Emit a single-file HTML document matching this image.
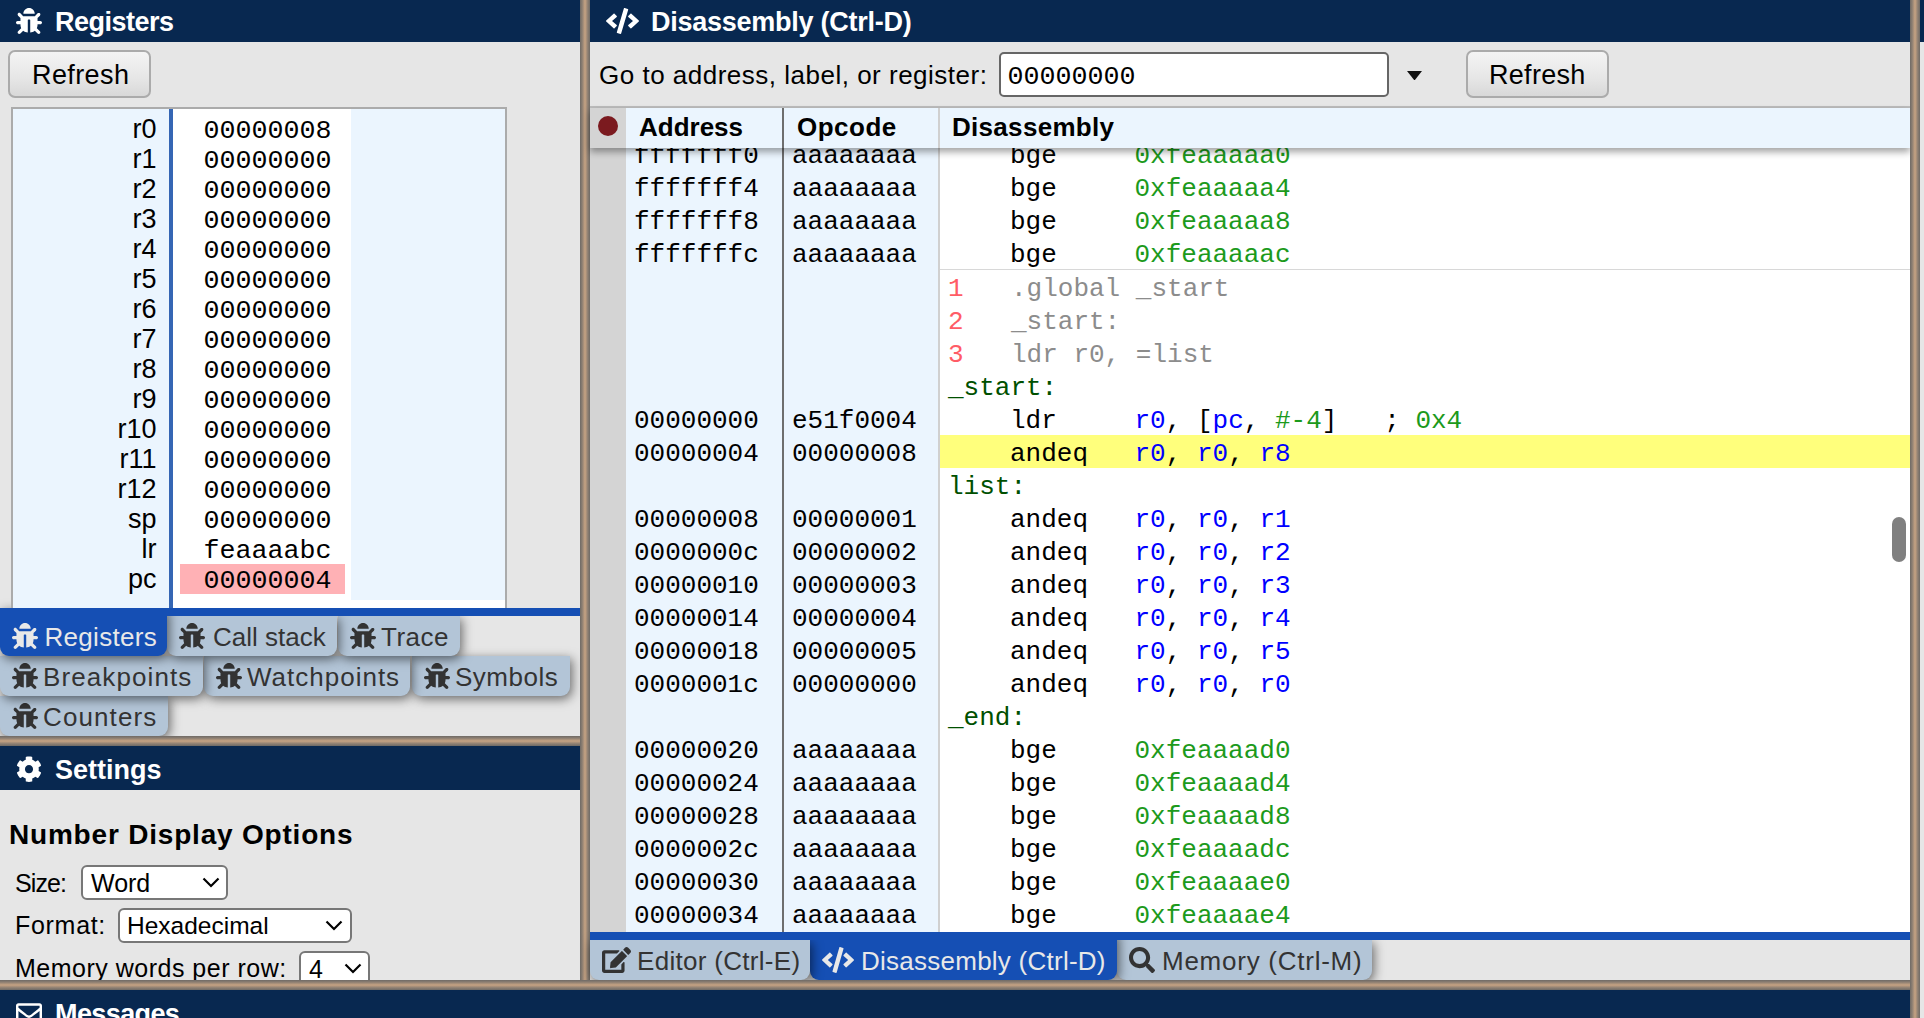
<!DOCTYPE html><html><head><meta charset="utf-8"><style>
*{box-sizing:border-box;margin:0;padding:0}
html,body{width:1924px;height:1018px;overflow:hidden;background:#e6e6e6;font-family:"Liberation Sans",sans-serif;color:#000;position:relative}
.abs{position:absolute}
.nav{background:#082850}
.vdiv{background:linear-gradient(90deg,#6e6a66 0%,#8d7f72 22%,#c6a383 50%,#8d7f72 78%,#6e6a66 100%)}
.hdiv{background:linear-gradient(180deg,#6e6a66 0%,#8d7f72 22%,#c6a383 50%,#8d7f72 78%,#6e6a66 100%)}
.t{position:absolute;white-space:pre;line-height:1}
.ht{font-weight:bold;font-size:27px;color:#fff}
.btn{position:absolute;border:2px solid #ababab;border-radius:7px;background:linear-gradient(180deg,#f4f4f4 0%,#e6e6e6 60%,#d8d8d8 100%)}
.mono{font-family:"Liberation Mono",monospace}
.tab{position:absolute;background:#b3c5d7;border-radius:0 0 9px 9px;box-shadow:2px 3px 11px rgba(0,0,0,0.55)}
.tabt{font-size:26px;color:#333}
.sel{position:absolute;background:#fff;border:2px solid #777;border-radius:6px}
</style></head><body>
<div class="abs nav" style="left:0;top:0;width:580px;height:42px"></div>
<svg class="abs" style="left:16px;top:8px" width="26" height="26" viewBox="0 0 512 512" preserveAspectRatio="none"><path fill="#fff" d="M511.988 288.9c-.478 17.43-15.217 31.1-32.653 31.1H424v16c0 21.864-4.882 42.584-13.6 61.145l60.228 60.228c12.496 12.497 12.496 32.758 0 45.255-12.498 12.497-32.759 12.496-45.256 0l-54.736-54.736C345.886 467.965 314.351 480 280 480V236c0-6.627-5.373-12-12-12h-24c-6.627 0-12 5.373-12 12v244c-34.351 0-65.886-12.035-90.636-32.108l-54.736 54.736c-12.498 12.497-32.759 12.496-45.256 0-12.496-12.497-12.496-32.758 0-45.255l60.228-60.228C92.882 378.584 88 357.864 88 336v-16H32.666C15.23 320 .491 306.33.013 288.9-.484 270.816 14.028 256 32 256h56v-58.745l-46.628-46.628c-12.496-12.497-12.496-32.758 0-45.255 12.498-12.497 32.758-12.497 45.256 0L141.255 160h229.489l54.627-54.627c12.498-12.497 32.758-12.497 45.256 0 12.496 12.497 12.496 32.758 0 45.255L424 197.255V256h56c17.972 0 32.484 14.816 31.988 32.9zM257 0c-61.856 0-112 50.144-112 112h224C369 50.144 318.856 0 257 0z"/></svg>
<div class="t ht" style="left:55px;top:9px;letter-spacing:-0.5px">Registers</div>
<div class="btn" style="left:8px;top:50px;width:143px;height:48px"></div>
<div class="t" style="left:32px;top:62px;font-size:27px;letter-spacing:0.4px">Refresh</div>
<div class="tab" style="left:0px;top:696px;width:168px;height:40px"></div>
<svg class="abs" style="left:12px;top:703px" width="26" height="26" viewBox="0 0 512 512" preserveAspectRatio="none"><path fill="#333" d="M511.988 288.9c-.478 17.43-15.217 31.1-32.653 31.1H424v16c0 21.864-4.882 42.584-13.6 61.145l60.228 60.228c12.496 12.497 12.496 32.758 0 45.255-12.498 12.497-32.759 12.496-45.256 0l-54.736-54.736C345.886 467.965 314.351 480 280 480V236c0-6.627-5.373-12-12-12h-24c-6.627 0-12 5.373-12 12v244c-34.351 0-65.886-12.035-90.636-32.108l-54.736 54.736c-12.498 12.497-32.759 12.496-45.256 0-12.496-12.497-12.496-32.758 0-45.255l60.228-60.228C92.882 378.584 88 357.864 88 336v-16H32.666C15.23 320 .491 306.33.013 288.9-.484 270.816 14.028 256 32 256h56v-58.745l-46.628-46.628c-12.496-12.497-12.496-32.758 0-45.255 12.498-12.497 32.758-12.497 45.256 0L141.255 160h229.489l54.627-54.627c12.498-12.497 32.758-12.497 45.256 0 12.496 12.497 12.496 32.758 0 45.255L424 197.255V256h56c17.972 0 32.484 14.816 31.988 32.9zM257 0c-61.856 0-112 50.144-112 112h224C369 50.144 318.856 0 257 0z"/></svg>
<div class="t tabt" style="left:43px;top:704px;color:#333;letter-spacing:1.1px">Counters</div>
<div class="tab" style="left:412px;top:656px;width:158px;height:40px"></div>
<svg class="abs" style="left:424px;top:663px" width="26" height="26" viewBox="0 0 512 512" preserveAspectRatio="none"><path fill="#333" d="M511.988 288.9c-.478 17.43-15.217 31.1-32.653 31.1H424v16c0 21.864-4.882 42.584-13.6 61.145l60.228 60.228c12.496 12.497 12.496 32.758 0 45.255-12.498 12.497-32.759 12.496-45.256 0l-54.736-54.736C345.886 467.965 314.351 480 280 480V236c0-6.627-5.373-12-12-12h-24c-6.627 0-12 5.373-12 12v244c-34.351 0-65.886-12.035-90.636-32.108l-54.736 54.736c-12.498 12.497-32.759 12.496-45.256 0-12.496-12.497-12.496-32.758 0-45.255l60.228-60.228C92.882 378.584 88 357.864 88 336v-16H32.666C15.23 320 .491 306.33.013 288.9-.484 270.816 14.028 256 32 256h56v-58.745l-46.628-46.628c-12.496-12.497-12.496-32.758 0-45.255 12.498-12.497 32.758-12.497 45.256 0L141.255 160h229.489l54.627-54.627c12.498-12.497 32.758-12.497 45.256 0 12.496 12.497 12.496 32.758 0 45.255L424 197.255V256h56c17.972 0 32.484 14.816 31.988 32.9zM257 0c-61.856 0-112 50.144-112 112h224C369 50.144 318.856 0 257 0z"/></svg>
<div class="t tabt" style="left:455px;top:664px;color:#333;letter-spacing:0.5px">Symbols</div>
<div class="tab" style="left:204px;top:656px;width:206px;height:40px"></div>
<svg class="abs" style="left:216px;top:663px" width="26" height="26" viewBox="0 0 512 512" preserveAspectRatio="none"><path fill="#333" d="M511.988 288.9c-.478 17.43-15.217 31.1-32.653 31.1H424v16c0 21.864-4.882 42.584-13.6 61.145l60.228 60.228c12.496 12.497 12.496 32.758 0 45.255-12.498 12.497-32.759 12.496-45.256 0l-54.736-54.736C345.886 467.965 314.351 480 280 480V236c0-6.627-5.373-12-12-12h-24c-6.627 0-12 5.373-12 12v244c-34.351 0-65.886-12.035-90.636-32.108l-54.736 54.736c-12.498 12.497-32.759 12.496-45.256 0-12.496-12.497-12.496-32.758 0-45.255l60.228-60.228C92.882 378.584 88 357.864 88 336v-16H32.666C15.23 320 .491 306.33.013 288.9-.484 270.816 14.028 256 32 256h56v-58.745l-46.628-46.628c-12.496-12.497-12.496-32.758 0-45.255 12.498-12.497 32.758-12.497 45.256 0L141.255 160h229.489l54.627-54.627c12.498-12.497 32.758-12.497 45.256 0 12.496 12.497 12.496 32.758 0 45.255L424 197.255V256h56c17.972 0 32.484 14.816 31.988 32.9zM257 0c-61.856 0-112 50.144-112 112h224C369 50.144 318.856 0 257 0z"/></svg>
<div class="t tabt" style="left:247px;top:664px;color:#333;letter-spacing:1.0px">Watchpoints</div>
<div class="tab" style="left:0px;top:656px;width:203px;height:40px"></div>
<svg class="abs" style="left:12px;top:663px" width="26" height="26" viewBox="0 0 512 512" preserveAspectRatio="none"><path fill="#333" d="M511.988 288.9c-.478 17.43-15.217 31.1-32.653 31.1H424v16c0 21.864-4.882 42.584-13.6 61.145l60.228 60.228c12.496 12.497 12.496 32.758 0 45.255-12.498 12.497-32.759 12.496-45.256 0l-54.736-54.736C345.886 467.965 314.351 480 280 480V236c0-6.627-5.373-12-12-12h-24c-6.627 0-12 5.373-12 12v244c-34.351 0-65.886-12.035-90.636-32.108l-54.736 54.736c-12.498 12.497-32.759 12.496-45.256 0-12.496-12.497-12.496-32.758 0-45.255l60.228-60.228C92.882 378.584 88 357.864 88 336v-16H32.666C15.23 320 .491 306.33.013 288.9-.484 270.816 14.028 256 32 256h56v-58.745l-46.628-46.628c-12.496-12.497-12.496-32.758 0-45.255 12.498-12.497 32.758-12.497 45.256 0L141.255 160h229.489l54.627-54.627c12.498-12.497 32.758-12.497 45.256 0 12.496 12.497 12.496 32.758 0 45.255L424 197.255V256h56c17.972 0 32.484 14.816 31.988 32.9zM257 0c-61.856 0-112 50.144-112 112h224C369 50.144 318.856 0 257 0z"/></svg>
<div class="t tabt" style="left:43px;top:664px;color:#333;letter-spacing:1.1px">Breakpoints</div>
<div class="tab" style="left:338px;top:616px;width:122px;height:40px"></div>
<svg class="abs" style="left:350px;top:623px" width="26" height="26" viewBox="0 0 512 512" preserveAspectRatio="none"><path fill="#333" d="M511.988 288.9c-.478 17.43-15.217 31.1-32.653 31.1H424v16c0 21.864-4.882 42.584-13.6 61.145l60.228 60.228c12.496 12.497 12.496 32.758 0 45.255-12.498 12.497-32.759 12.496-45.256 0l-54.736-54.736C345.886 467.965 314.351 480 280 480V236c0-6.627-5.373-12-12-12h-24c-6.627 0-12 5.373-12 12v244c-34.351 0-65.886-12.035-90.636-32.108l-54.736 54.736c-12.498 12.497-32.759 12.496-45.256 0-12.496-12.497-12.496-32.758 0-45.255l60.228-60.228C92.882 378.584 88 357.864 88 336v-16H32.666C15.23 320 .491 306.33.013 288.9-.484 270.816 14.028 256 32 256h56v-58.745l-46.628-46.628c-12.496-12.497-12.496-32.758 0-45.255 12.498-12.497 32.758-12.497 45.256 0L141.255 160h229.489l54.627-54.627c12.498-12.497 32.758-12.497 45.256 0 12.496 12.497 12.496 32.758 0 45.255L424 197.255V256h56c17.972 0 32.484 14.816 31.988 32.9zM257 0c-61.856 0-112 50.144-112 112h224C369 50.144 318.856 0 257 0z"/></svg>
<div class="t tabt" style="left:381px;top:624px;color:#333;letter-spacing:0.5px">Trace</div>
<div class="tab" style="left:167px;top:616px;width:170px;height:40px"></div>
<svg class="abs" style="left:179px;top:623px" width="26" height="26" viewBox="0 0 512 512" preserveAspectRatio="none"><path fill="#333" d="M511.988 288.9c-.478 17.43-15.217 31.1-32.653 31.1H424v16c0 21.864-4.882 42.584-13.6 61.145l60.228 60.228c12.496 12.497 12.496 32.758 0 45.255-12.498 12.497-32.759 12.496-45.256 0l-54.736-54.736C345.886 467.965 314.351 480 280 480V236c0-6.627-5.373-12-12-12h-24c-6.627 0-12 5.373-12 12v244c-34.351 0-65.886-12.035-90.636-32.108l-54.736 54.736c-12.498 12.497-32.759 12.496-45.256 0-12.496-12.497-12.496-32.758 0-45.255l60.228-60.228C92.882 378.584 88 357.864 88 336v-16H32.666C15.23 320 .491 306.33.013 288.9-.484 270.816 14.028 256 32 256h56v-58.745l-46.628-46.628c-12.496-12.497-12.496-32.758 0-45.255 12.498-12.497 32.758-12.497 45.256 0L141.255 160h229.489l54.627-54.627c12.498-12.497 32.758-12.497 45.256 0 12.496 12.497 12.496 32.758 0 45.255L424 197.255V256h56c17.972 0 32.484 14.816 31.988 32.9zM257 0c-61.856 0-112 50.144-112 112h224C369 50.144 318.856 0 257 0z"/></svg>
<div class="t tabt" style="left:213px;top:624px;color:#333;letter-spacing:0.0px">Call stack</div>
<div class="tab" style="left:0px;top:608px;width:167px;height:48px;background:#154fb4"></div>
<svg class="abs" style="left:12px;top:623px" width="26" height="26" viewBox="0 0 512 512" preserveAspectRatio="none"><path fill="#e8e8e8" d="M511.988 288.9c-.478 17.43-15.217 31.1-32.653 31.1H424v16c0 21.864-4.882 42.584-13.6 61.145l60.228 60.228c12.496 12.497 12.496 32.758 0 45.255-12.498 12.497-32.759 12.496-45.256 0l-54.736-54.736C345.886 467.965 314.351 480 280 480V236c0-6.627-5.373-12-12-12h-24c-6.627 0-12 5.373-12 12v244c-34.351 0-65.886-12.035-90.636-32.108l-54.736 54.736c-12.498 12.497-32.759 12.496-45.256 0-12.496-12.497-12.496-32.758 0-45.255l60.228-60.228C92.882 378.584 88 357.864 88 336v-16H32.666C15.23 320 .491 306.33.013 288.9-.484 270.816 14.028 256 32 256h56v-58.745l-46.628-46.628c-12.496-12.497-12.496-32.758 0-45.255 12.498-12.497 32.758-12.497 45.256 0L141.255 160h229.489l54.627-54.627c12.498-12.497 32.758-12.497 45.256 0 12.496 12.497 12.496 32.758 0 45.255L424 197.255V256h56c17.972 0 32.484 14.816 31.988 32.9zM257 0c-61.856 0-112 50.144-112 112h224C369 50.144 318.856 0 257 0z"/></svg>
<div class="t tabt" style="left:44.5px;top:624px;color:#e8e8e8;letter-spacing:0.3px">Registers</div>
<div class="abs" style="left:11px;top:107px;width:496px;height:501px;border:2px solid #ababab;border-bottom:none;background:#ebf5fe"></div>
<div class="abs" style="left:351px;top:600px;width:154px;height:8px;background:#fff"></div>
<div class="abs" style="left:169px;top:109px;width:4px;height:499px;background:#3566b4"></div>
<div class="abs" style="left:173px;top:109px;width:178px;height:499px;background:#fff"></div>
<div class="abs" style="left:180px;top:564px;width:165px;height:30px;background:#ffb1b5"></div>
<div class="t" style="left:20px;width:136.5px;text-align:right;top:115.5px;font-size:27px;letter-spacing:0px">r0</div>
<div class="t mono" style="left:203.5px;top:118px;font-size:26.67px">00000008</div>
<div class="t" style="left:20px;width:136.5px;text-align:right;top:145.5px;font-size:27px;letter-spacing:0px">r1</div>
<div class="t mono" style="left:203.5px;top:148px;font-size:26.67px">00000000</div>
<div class="t" style="left:20px;width:136.5px;text-align:right;top:175.5px;font-size:27px;letter-spacing:0px">r2</div>
<div class="t mono" style="left:203.5px;top:178px;font-size:26.67px">00000000</div>
<div class="t" style="left:20px;width:136.5px;text-align:right;top:205.5px;font-size:27px;letter-spacing:0px">r3</div>
<div class="t mono" style="left:203.5px;top:208px;font-size:26.67px">00000000</div>
<div class="t" style="left:20px;width:136.5px;text-align:right;top:235.5px;font-size:27px;letter-spacing:0px">r4</div>
<div class="t mono" style="left:203.5px;top:238px;font-size:26.67px">00000000</div>
<div class="t" style="left:20px;width:136.5px;text-align:right;top:265.5px;font-size:27px;letter-spacing:0px">r5</div>
<div class="t mono" style="left:203.5px;top:268px;font-size:26.67px">00000000</div>
<div class="t" style="left:20px;width:136.5px;text-align:right;top:295.5px;font-size:27px;letter-spacing:0px">r6</div>
<div class="t mono" style="left:203.5px;top:298px;font-size:26.67px">00000000</div>
<div class="t" style="left:20px;width:136.5px;text-align:right;top:325.5px;font-size:27px;letter-spacing:0px">r7</div>
<div class="t mono" style="left:203.5px;top:328px;font-size:26.67px">00000000</div>
<div class="t" style="left:20px;width:136.5px;text-align:right;top:355.5px;font-size:27px;letter-spacing:0px">r8</div>
<div class="t mono" style="left:203.5px;top:358px;font-size:26.67px">00000000</div>
<div class="t" style="left:20px;width:136.5px;text-align:right;top:385.5px;font-size:27px;letter-spacing:0px">r9</div>
<div class="t mono" style="left:203.5px;top:388px;font-size:26.67px">00000000</div>
<div class="t" style="left:20px;width:136.5px;text-align:right;top:415.5px;font-size:27px;letter-spacing:0px">r10</div>
<div class="t mono" style="left:203.5px;top:418px;font-size:26.67px">00000000</div>
<div class="t" style="left:20px;width:136.5px;text-align:right;top:445.5px;font-size:27px;letter-spacing:0px">r11</div>
<div class="t mono" style="left:203.5px;top:448px;font-size:26.67px">00000000</div>
<div class="t" style="left:20px;width:136.5px;text-align:right;top:475.5px;font-size:27px;letter-spacing:0px">r12</div>
<div class="t mono" style="left:203.5px;top:478px;font-size:26.67px">00000000</div>
<div class="t" style="left:20px;width:136.5px;text-align:right;top:505.5px;font-size:27px;letter-spacing:0px">sp</div>
<div class="t mono" style="left:203.5px;top:508px;font-size:26.67px">00000000</div>
<div class="t" style="left:20px;width:136.5px;text-align:right;top:535.5px;font-size:27px;letter-spacing:0px">lr</div>
<div class="t mono" style="left:203.5px;top:538px;font-size:26.67px">feaaaabc</div>
<div class="t" style="left:20px;width:136.5px;text-align:right;top:565.5px;font-size:27px;letter-spacing:0px">pc</div>
<div class="t mono" style="left:203.5px;top:568px;font-size:26.67px">00000004</div>
<div class="abs" style="left:0;top:608px;width:580px;height:8px;background:#154fb4"></div>
<div class="abs hdiv" style="left:0;top:736px;width:580px;height:10px"></div>
<div class="abs nav" style="left:0;top:746px;width:580px;height:44px"></div>
<svg class="abs" style="left:16px;top:756px" width="26" height="26.3" viewBox="0 0 512 512" preserveAspectRatio="none"><path fill="#fff" d="M487.4 315.7l-42.6-24.6c4.3-23.2 4.3-47 0-70.2l42.6-24.6c4.9-2.8 7.1-8.600 5.5-14-11.1-35.6-30-67.8-54.7-94.6-3.8-4.1-10-5.1-14.8-2.3L380.8 110c-17.9-15.4-38.5-27.3-60.8-35.1V25.8c0-5.6-3.9-10.5-9.4-11.7-36.7-8.2-74.3-7.8-109.2 0-5.5 1.2-9.4 6.1-9.4 11.7V75c-22.2 7.9-42.8 19.8-60.8 35.1L88.7 85.5c-4.9-2.8-11-1.9-14.8 2.3-24.7 26.7-43.6 58.9-54.7 94.6-1.7 5.4.6 11.2 5.5 14L67.3 221c-4.3 23.2-4.3 47 0 70.2l-42.6 24.6c-4.9 2.8-7.1 8.6-5.5 14 11.1 35.6 30 67.8 54.7 94.6 3.8 4.1 10 5.1 14.8 2.3l42.6-24.6c17.9 15.4 38.5 27.3 60.8 35.1v49.2c0 5.6 3.9 10.5 9.4 11.7 36.7 8.2 74.3 7.8 109.2 0 5.5-1.2 9.4-6.1 9.4-11.7v-49.2c22.2-7.9 42.8-19.8 60.8-35.1l42.6 24.6c4.9 2.8 11 1.9 14.8-2.3 24.7-26.7 43.6-58.9 54.7-94.6 1.5-5.5-.7-11.3-5.6-14.1zM256 336c-44.1 0-80-35.9-80-80s35.9-80 80-80 80 35.9 80 80-35.9 80-80 80z"/></svg>
<div class="t ht" style="left:55px;top:757px">Settings</div>
<div class="t" style="left:9px;top:821px;font-size:28px;font-weight:bold;letter-spacing:0.8px">Number Display Options</div>
<div class="t" style="left:15px;top:871px;font-size:25px;letter-spacing:-0.9px">Size:</div>
<div class="sel" style="left:81px;top:865px;width:147px;height:35px"></div>
<div class="t" style="left:91px;top:871px;font-size:25px">Word</div>
<div class="t" style="left:15px;top:913px;font-size:25px;letter-spacing:0.7px">Format:</div>
<div class="sel" style="left:118px;top:908px;width:234px;height:35px"></div>
<div class="t" style="left:127px;top:914px;font-size:24.5px">Hexadecimal</div>
<div class="t" style="left:15px;top:956px;font-size:25px;letter-spacing:0.5px">Memory words per row:</div>
<div class="sel" style="left:299px;top:951px;width:71px;height:35px"></div>
<div class="t" style="left:309px;top:957px;font-size:25px">4</div>
<svg class="abs" style="left:202px;top:877px" width="18" height="11" viewBox="0 0 18 11"><path d="M1.5 1.5 L9 9 L16.5 1.5" fill="none" stroke="#000" stroke-width="2.2"/></svg>
<svg class="abs" style="left:325px;top:920px" width="18" height="11" viewBox="0 0 18 11"><path d="M1.5 1.5 L9 9 L16.5 1.5" fill="none" stroke="#000" stroke-width="2.2"/></svg>
<svg class="abs" style="left:344px;top:963px" width="18" height="11" viewBox="0 0 18 11"><path d="M1.5 1.5 L9 9 L16.5 1.5" fill="none" stroke="#000" stroke-width="2.2"/></svg>
<div class="abs vdiv" style="left:580px;top:0;width:10px;height:980px"></div>
<div class="abs nav" style="left:590px;top:0;width:1320px;height:42px"></div>
<svg class="abs" style="left:605.5px;top:8px" width="33" height="26" viewBox="0 0 640 512" preserveAspectRatio="none"><path fill="#fff" d="M278.9 511.5l-61-17.7c-6.4-1.8-10-8.5-8.2-14.9L346.2 8.7c1.8-6.4 8.5-10 14.9-8.2l61 17.7c6.4 1.8 10 8.5 8.2 14.9L293.8 503.3c-1.9 6.4-8.5 10.1-14.9 8.2zm-114-112.2l43.5-46.4c4.6-4.9 4.3-12.7-.8-17.2L117 256l90.6-79.7c5.1-4.5 5.5-12.3.8-17.2l-43.5-46.4c-4.5-4.8-12.1-5.1-17-.5L3.8 247.2c-5.1 4.7-5.1 12.800 0 17.5l144.1 135.1c4.9 4.6 12.5 4.4 17-.5zm327.2.6l144.1-135.1c5.1-4.7 5.1-12.8 0-17.5L492.1 112.1c-4.800-4.5-12.4-4.3-17 .5L431.6 159c-4.6 4.9-4.3 12.7.8 17.2L523 256l-90.6 79.7c-5.1 4.5-5.5 12.3-.8 17.2l43.5 46.4c4.5 4.9 12.1 5.1 17 .6z"/></svg>
<div class="t ht" style="left:651px;top:9px;letter-spacing:-0.25px">Disassembly (Ctrl-D)</div>
<div class="t" style="left:599px;top:62px;font-size:26px;letter-spacing:0.5px">Go to address, label, or register:</div>
<div class="abs" style="left:999px;top:52px;width:390px;height:45px;background:#fff;border:2px solid #666;border-radius:5px"></div>
<div class="t mono" style="left:1007.5px;top:64px;font-size:26.67px">00000000</div>
<svg class="abs" style="left:1406.5px;top:70.5px" width="15" height="9.5" viewBox="0 0 15 9.5"><path d="M0 0 H15 L7.5 9.5 Z" fill="#111"/></svg>
<div class="btn" style="left:1466px;top:50px;width:143px;height:48px"></div>
<div class="t" style="left:1489px;top:62px;font-size:27px;letter-spacing:0.3px">Refresh</div>
<div class="tab" style="left:1117px;top:940px;width:255px;height:40px"></div>
<svg class="abs" style="left:1129px;top:947px" width="26" height="26" viewBox="0 0 512 512" preserveAspectRatio="none"><path fill="#333" d="M505 442.7L405.3 343c-4.5-4.5-10.6-7-17-7H372c27.6-35.3 44-79.7 44-128C416 93.1 322.9 0 208 0S0 93.1 0 208s93.1 208 208 208c48.3 0 92.7-16.4 128-44v16.3c0 6.4 2.5 12.5 7 17l99.7 99.7c9.4 9.4 24.6 9.4 33.9 0l28.3-28.3c9.4-9.4 9.4-24.6.1-34zM208 336c-70.7 0-128-57.2-128-128 0-70.7 57.2-128 128-128 70.7 0 128 57.2 128 128 0 70.700-57.2 128-128 128z"/></svg>
<div class="t tabt" style="left:1162px;top:947.5px;color:#333;letter-spacing:0.75px">Memory (Ctrl-M)</div>
<div class="tab" style="left:810px;top:932px;width:307px;height:48px;background:#154fb4"></div>
<svg class="abs" style="left:822px;top:947px" width="32" height="26" viewBox="0 0 640 512" preserveAspectRatio="none"><path fill="#e8e8e8" d="M278.9 511.5l-61-17.7c-6.4-1.8-10-8.5-8.2-14.9L346.2 8.7c1.8-6.4 8.5-10 14.9-8.2l61 17.7c6.4 1.8 10 8.5 8.2 14.9L293.8 503.3c-1.9 6.4-8.5 10.1-14.9 8.2zm-114-112.2l43.5-46.4c4.6-4.9 4.3-12.7-.8-17.2L117 256l90.6-79.7c5.1-4.5 5.5-12.3.8-17.2l-43.5-46.4c-4.5-4.8-12.1-5.1-17-.5L3.8 247.2c-5.1 4.7-5.1 12.800 0 17.5l144.1 135.1c4.9 4.6 12.5 4.4 17-.5zm327.2.6l144.1-135.1c5.1-4.7 5.1-12.8 0-17.5L492.1 112.1c-4.800-4.5-12.4-4.3-17 .5L431.6 159c-4.6 4.9-4.3 12.7.8 17.2L523 256l-90.6 79.7c-5.1 4.5-5.5 12.3-.8 17.2l43.5 46.4c4.5 4.9 12.1 5.1 17 .6z"/></svg>
<div class="t tabt" style="left:861px;top:947.5px;color:#e8e8e8;letter-spacing:0.25px">Disassembly (Ctrl-D)</div>
<div class="tab" style="left:590px;top:940px;width:220px;height:40px"></div>
<svg class="abs" style="left:602px;top:947px" width="29" height="26" viewBox="0 0 576 512" preserveAspectRatio="none"><path fill="#333" d="M402.6 83.2l90.2 90.2c3.8 3.8 3.8 10 0 13.8L274.4 405.6l-92.8 10.3c-12.4 1.4-22.9-9.1-21.5-21.5l10.3-92.8L388.8 83.2c3.8-3.8 10-3.8 13.8 0zm162-22.9l-48.8-48.8c-15.2-15.2-39.9-15.2-55.2 0l-35.4 35.4c-3.8 3.8-3.8 10 0 13.8l90.2 90.2c3.8 3.8 10 3.8 13.8 0l35.4-35.4c15.2-15.300 15.2-40 0-55.2zM384 346.2V448H64V128h229.8c3.2 0 6.2-1.3 8.5-3.5l40-40c7.600-7.6 2.2-20.5-8.5-20.5H48C21.5 64 0 85.5 0 112v352c0 26.5 21.5 48 48 48h352c26.5 0 48-21.5 48-48V306.2c0-10.7-12.9-16-20.5-8.5l-40 40c-2.2 2.3-3.5 5.3-3.5 8.5z"/></svg>
<div class="t tabt" style="left:637px;top:947.5px;color:#333;letter-spacing:0.3px">Editor (Ctrl-E)</div>
<div class="abs" style="left:590px;top:106px;width:1320px;height:2px;background:#bdbdbd"></div>
<div class="abs" style="left:590px;top:108px;width:36px;height:824px;background:#d4d4d4"></div>
<div class="abs" style="left:626px;top:108px;width:156px;height:824px;background:#ebf5fe"></div>
<div class="abs" style="left:782px;top:108px;width:2px;height:824px;background:#6e6e6e"></div>
<div class="abs" style="left:784px;top:108px;width:154px;height:824px;background:#ebf5fe"></div>
<div class="abs" style="left:938px;top:108px;width:2px;height:824px;background:#d0d0d0"></div>
<div class="abs" style="left:940px;top:108px;width:970px;height:824px;background:#fff"></div>
<div class="abs" style="left:590px;top:108px;width:1320px;height:824px;overflow:hidden">
<div class="abs" style="left:-590px;top:-108px;width:1924px;height:1018px">
<div class="t mono" style="left:634px;top:143px;font-size:26px">fffffff0</div>
<div class="t mono" style="left:792px;top:143px;font-size:26px">aaaaaaaa</div>
<div class="t mono" style="left:1010px;top:143px;font-size:26px">bge</div>
<div class="t mono" style="left:1134.5px;top:143px;font-size:26px"><span style="color:#1c9a1c">0xfeaaaaa0</span></div>
<div class="t mono" style="left:634px;top:176px;font-size:26px">fffffff4</div>
<div class="t mono" style="left:792px;top:176px;font-size:26px">aaaaaaaa</div>
<div class="t mono" style="left:1010px;top:176px;font-size:26px">bge</div>
<div class="t mono" style="left:1134.5px;top:176px;font-size:26px"><span style="color:#1c9a1c">0xfeaaaaa4</span></div>
<div class="t mono" style="left:634px;top:209px;font-size:26px">fffffff8</div>
<div class="t mono" style="left:792px;top:209px;font-size:26px">aaaaaaaa</div>
<div class="t mono" style="left:1010px;top:209px;font-size:26px">bge</div>
<div class="t mono" style="left:1134.5px;top:209px;font-size:26px"><span style="color:#1c9a1c">0xfeaaaaa8</span></div>
<div class="t mono" style="left:634px;top:242px;font-size:26px">fffffffc</div>
<div class="t mono" style="left:792px;top:242px;font-size:26px">aaaaaaaa</div>
<div class="t mono" style="left:1010px;top:242px;font-size:26px">bge</div>
<div class="t mono" style="left:1134.5px;top:242px;font-size:26px"><span style="color:#1c9a1c">0xfeaaaaac</span></div>
<div class="abs" style="left:940px;top:269px;width:970px;height:1px;background:#d8d8d8"></div>
<div class="t mono" style="left:948px;top:276px;font-size:26px;color:#ff5c66">1</div>
<div class="t mono" style="left:1011px;top:276px;font-size:26px;color:#8c8c8c">.global _start</div>
<div class="t mono" style="left:948px;top:309px;font-size:26px;color:#ff5c66">2</div>
<div class="t mono" style="left:1011px;top:309px;font-size:26px;color:#8c8c8c">_start:</div>
<div class="t mono" style="left:948px;top:342px;font-size:26px;color:#ff5c66">3</div>
<div class="t mono" style="left:1011px;top:342px;font-size:26px;color:#8c8c8c">ldr r0, =list</div>
<div class="t mono" style="left:948px;top:375px;font-size:26px;color:#005000">_start:</div>
<div class="t mono" style="left:634px;top:408px;font-size:26px">00000000</div>
<div class="t mono" style="left:792px;top:408px;font-size:26px">e51f0004</div>
<div class="t mono" style="left:1010px;top:408px;font-size:26px">ldr</div>
<div class="t mono" style="left:1134.5px;top:408px;font-size:26px"><span style="color:#0000ff">r0</span><span style="color:#000">, [</span><span style="color:#0000ff">pc</span><span style="color:#000">, </span><span style="color:#1c9a1c">#-4</span><span style="color:#000">]</span><span style="color:#000">   ; </span><span style="color:#1c9a1c">0x4</span></div>
<div class="abs" style="left:940px;top:435px;width:970px;height:33px;background:#ffff7c"></div>
<div class="t mono" style="left:634px;top:441px;font-size:26px">00000004</div>
<div class="t mono" style="left:792px;top:441px;font-size:26px">00000008</div>
<div class="t mono" style="left:1010px;top:441px;font-size:26px">andeq</div>
<div class="t mono" style="left:1134.5px;top:441px;font-size:26px"><span style="color:#0000ff">r0</span><span style="color:#000">, </span><span style="color:#0000ff">r0</span><span style="color:#000">, </span><span style="color:#0000ff">r8</span></div>
<div class="t mono" style="left:948px;top:474px;font-size:26px;color:#005000">list:</div>
<div class="t mono" style="left:634px;top:507px;font-size:26px">00000008</div>
<div class="t mono" style="left:792px;top:507px;font-size:26px">00000001</div>
<div class="t mono" style="left:1010px;top:507px;font-size:26px">andeq</div>
<div class="t mono" style="left:1134.5px;top:507px;font-size:26px"><span style="color:#0000ff">r0</span><span style="color:#000">, </span><span style="color:#0000ff">r0</span><span style="color:#000">, </span><span style="color:#0000ff">r1</span></div>
<div class="t mono" style="left:634px;top:540px;font-size:26px">0000000c</div>
<div class="t mono" style="left:792px;top:540px;font-size:26px">00000002</div>
<div class="t mono" style="left:1010px;top:540px;font-size:26px">andeq</div>
<div class="t mono" style="left:1134.5px;top:540px;font-size:26px"><span style="color:#0000ff">r0</span><span style="color:#000">, </span><span style="color:#0000ff">r0</span><span style="color:#000">, </span><span style="color:#0000ff">r2</span></div>
<div class="t mono" style="left:634px;top:573px;font-size:26px">00000010</div>
<div class="t mono" style="left:792px;top:573px;font-size:26px">00000003</div>
<div class="t mono" style="left:1010px;top:573px;font-size:26px">andeq</div>
<div class="t mono" style="left:1134.5px;top:573px;font-size:26px"><span style="color:#0000ff">r0</span><span style="color:#000">, </span><span style="color:#0000ff">r0</span><span style="color:#000">, </span><span style="color:#0000ff">r3</span></div>
<div class="t mono" style="left:634px;top:606px;font-size:26px">00000014</div>
<div class="t mono" style="left:792px;top:606px;font-size:26px">00000004</div>
<div class="t mono" style="left:1010px;top:606px;font-size:26px">andeq</div>
<div class="t mono" style="left:1134.5px;top:606px;font-size:26px"><span style="color:#0000ff">r0</span><span style="color:#000">, </span><span style="color:#0000ff">r0</span><span style="color:#000">, </span><span style="color:#0000ff">r4</span></div>
<div class="t mono" style="left:634px;top:639px;font-size:26px">00000018</div>
<div class="t mono" style="left:792px;top:639px;font-size:26px">00000005</div>
<div class="t mono" style="left:1010px;top:639px;font-size:26px">andeq</div>
<div class="t mono" style="left:1134.5px;top:639px;font-size:26px"><span style="color:#0000ff">r0</span><span style="color:#000">, </span><span style="color:#0000ff">r0</span><span style="color:#000">, </span><span style="color:#0000ff">r5</span></div>
<div class="t mono" style="left:634px;top:672px;font-size:26px">0000001c</div>
<div class="t mono" style="left:792px;top:672px;font-size:26px">00000000</div>
<div class="t mono" style="left:1010px;top:672px;font-size:26px">andeq</div>
<div class="t mono" style="left:1134.5px;top:672px;font-size:26px"><span style="color:#0000ff">r0</span><span style="color:#000">, </span><span style="color:#0000ff">r0</span><span style="color:#000">, </span><span style="color:#0000ff">r0</span></div>
<div class="t mono" style="left:948px;top:705px;font-size:26px;color:#005000">_end:</div>
<div class="t mono" style="left:634px;top:738px;font-size:26px">00000020</div>
<div class="t mono" style="left:792px;top:738px;font-size:26px">aaaaaaaa</div>
<div class="t mono" style="left:1010px;top:738px;font-size:26px">bge</div>
<div class="t mono" style="left:1134.5px;top:738px;font-size:26px"><span style="color:#1c9a1c">0xfeaaaad0</span></div>
<div class="t mono" style="left:634px;top:771px;font-size:26px">00000024</div>
<div class="t mono" style="left:792px;top:771px;font-size:26px">aaaaaaaa</div>
<div class="t mono" style="left:1010px;top:771px;font-size:26px">bge</div>
<div class="t mono" style="left:1134.5px;top:771px;font-size:26px"><span style="color:#1c9a1c">0xfeaaaad4</span></div>
<div class="t mono" style="left:634px;top:804px;font-size:26px">00000028</div>
<div class="t mono" style="left:792px;top:804px;font-size:26px">aaaaaaaa</div>
<div class="t mono" style="left:1010px;top:804px;font-size:26px">bge</div>
<div class="t mono" style="left:1134.5px;top:804px;font-size:26px"><span style="color:#1c9a1c">0xfeaaaad8</span></div>
<div class="t mono" style="left:634px;top:837px;font-size:26px">0000002c</div>
<div class="t mono" style="left:792px;top:837px;font-size:26px">aaaaaaaa</div>
<div class="t mono" style="left:1010px;top:837px;font-size:26px">bge</div>
<div class="t mono" style="left:1134.5px;top:837px;font-size:26px"><span style="color:#1c9a1c">0xfeaaaadc</span></div>
<div class="t mono" style="left:634px;top:870px;font-size:26px">00000030</div>
<div class="t mono" style="left:792px;top:870px;font-size:26px">aaaaaaaa</div>
<div class="t mono" style="left:1010px;top:870px;font-size:26px">bge</div>
<div class="t mono" style="left:1134.5px;top:870px;font-size:26px"><span style="color:#1c9a1c">0xfeaaaae0</span></div>
<div class="t mono" style="left:634px;top:903px;font-size:26px">00000034</div>
<div class="t mono" style="left:792px;top:903px;font-size:26px">aaaaaaaa</div>
<div class="t mono" style="left:1010px;top:903px;font-size:26px">bge</div>
<div class="t mono" style="left:1134.5px;top:903px;font-size:26px"><span style="color:#1c9a1c">0xfeaaaae4</span></div>
</div></div>
<div class="abs" style="left:590px;top:108px;width:1320px;height:40px;box-shadow:0 4px 7px rgba(0,0,0,0.36)"></div>
<div class="abs" style="left:590px;top:108px;width:36px;height:40px;background:#d4d4d4"></div>
<div class="abs" style="left:626px;top:108px;width:1284px;height:40px;background:#ebf5fe"></div>
<div class="abs" style="left:782px;top:108px;width:2px;height:40px;background:#6e6e6e"></div>
<div class="abs" style="left:938px;top:108px;width:2px;height:40px;background:#d0d0d0"></div>
<div class="abs" style="left:598px;top:116px;width:20px;height:20px;border-radius:50%;background:#7b1a1f"></div>
<div class="t" style="left:639px;top:113.5px;font-size:26px;font-weight:bold">Address</div>
<div class="t" style="left:797px;top:113.5px;font-size:26px;font-weight:bold;letter-spacing:0.5px">Opcode</div>
<div class="t" style="left:952px;top:113.5px;font-size:26px;font-weight:bold;letter-spacing:0.3px">Disassembly</div>
<div class="abs" style="left:1892px;top:517px;width:14px;height:45px;border-radius:7px;background:#808080"></div>
<div class="abs" style="left:590px;top:932px;width:1320px;height:8px;background:#154fb4"></div>
<div class="abs hdiv" style="left:0;top:980px;width:1910px;height:10px"></div>
<div class="abs nav" style="left:0;top:990px;width:1910px;height:28px"></div>
<svg class="abs" style="left:16px;top:1000px" width="26" height="26" viewBox="0 0 512 512" preserveAspectRatio="none"><path fill="#fff" d="M464 64H48C21.49 64 0 85.49 0 112v288c0 26.51 21.49 48 48 48h416c26.51 0 48-21.49 48-48V112c0-26.51-21.49-48-48-48zm0 48v40.805c-22.422 18.259-58.168 46.651-134.587 106.49-16.841 13.247-50.201 45.072-73.413 44.701-23.208.375-56.579-31.459-73.413-44.701C106.18 199.465 70.425 171.067 48 152.805V112h416zM48 400V214.398c22.914 18.251 55.409 43.862 104.938 82.646 21.857 17.205 60.134 55.186 103.062 54.955 42.717.231 80.509-37.199 103.053-54.947 49.528-38.783 82.032-64.401 104.947-82.653V400H48z"/></svg>
<div class="t ht" style="left:55px;top:1000.5px;letter-spacing:-0.6px">Messages</div>
<div class="abs vdiv" style="left:1910px;top:0;width:10px;height:1018px"></div>
<div class="abs" style="left:1920px;top:0;width:4px;height:1018px;background:#e6e6e6"></div>
<div class="abs nav" style="left:1920px;top:0;width:4px;height:42px"></div>
</body></html>
